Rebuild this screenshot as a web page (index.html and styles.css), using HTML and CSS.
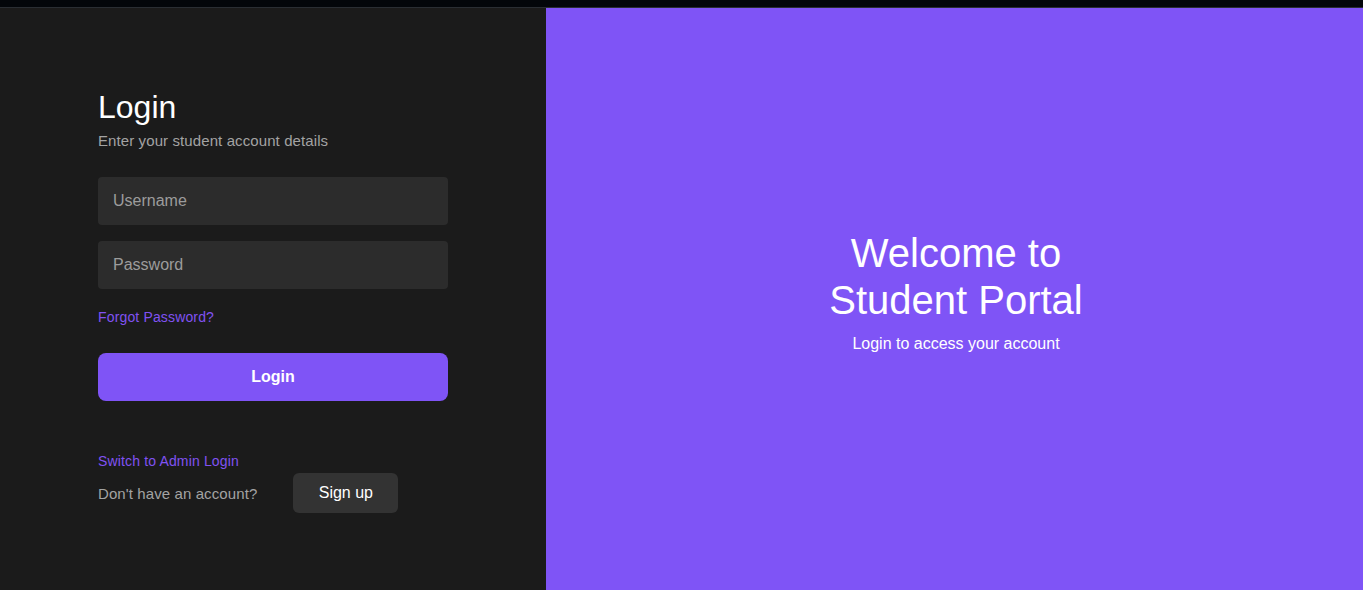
FILE: index.html
```html
<!DOCTYPE html>
<html lang="en">
<head>
    <meta charset="UTF-8">
    <meta name="viewport" content="width=device-width, initial-scale=1.0">
    <title>Student Portal - Login</title>
    <link rel="stylesheet" href="styles.css">
</head>
<body>
    <div class="topbar"></div>
    <div class="page">
        <div class="login-panel">
            <div class="login-box">
                <h2>Login</h2>
                <p class="subtitle">Enter your student account details</p>
                <input type="text" class="field" placeholder="Username">
                <input type="password" class="field" placeholder="Password">
                <a href="#" class="link forgot">Forgot Password?</a>
                <button class="btn">Login</button>
                <a href="#" class="link admin">Switch to Admin Login</a>
                <div class="signup-row">
                    <span>Don't have an account?</span>
                    <button class="btn-secondary">Sign up</button>
                </div>
            </div>
        </div>
        <div class="welcome-panel">
            <h1>Welcome to<br>Student Portal</h1>
            <p>Login to access your account</p>
        </div>
    </div>
</body>
</html>
```

FILE: styles.css
```css
* {
    margin: 0;
    padding: 0;
    box-sizing: border-box;
}

html, body {
    height: 100%;
}

body {
    font-family: 'Liberation Sans', Arial, sans-serif;
    background-color: #1b1b1b;
    display: flex;
    flex-direction: column;
    overflow: hidden;
}

.topbar {
    height: 8px;
    background-color: #03060a;
    border-bottom: 1px solid #2a2e33;
    flex-shrink: 0;
}

.page {
    flex: 1;
    display: flex;
}

.login-panel {
    width: 546px;
    flex-shrink: 0;
    background-color: #1b1b1b;
    padding: 81px 0 0 98px;
}

.login-box {
    width: 350px;
    display: flex;
    flex-direction: column;
    align-items: flex-start;
}

.login-box h2 {
    font-size: 32px;
    font-weight: 400;
    line-height: 37px;
    color: #ffffff;
}

.subtitle {
    margin-top: 6px;
    font-size: 15px;
    line-height: 17px;
    color: #a3a3a3;
    letter-spacing: 0.1px;
}

.field {
    width: 100%;
    height: 48px;
    margin-top: 28px;
    padding: 0 15px;
    background-color: #2c2c2c;
    border: none;
    border-radius: 4px;
    color: #ffffff;
    font-family: inherit;
    font-size: 16px;
    outline: none;
}

.field + .field {
    margin-top: 16px;
}

.field::placeholder {
    color: #9c9c9c;
}

.link {
    font-size: 14px;
    line-height: 16px;
    color: #8052f2;
    text-decoration: none;
    letter-spacing: 0.15px;
}

.forgot {
    margin-top: 20px;
}

.btn {
    width: 100%;
    height: 48px;
    margin-top: 28px;
    background-color: #7f54f6;
    color: #ffffff;
    border: none;
    border-radius: 8px;
    font-family: inherit;
    font-size: 16px;
    font-weight: 700;
    cursor: pointer;
}

.admin {
    margin-top: 52px;
}

.signup-row {
    margin-top: 4px;
    display: flex;
    align-items: center;
    gap: 36px;
    font-size: 15px;
    color: #a3a3a3;
    letter-spacing: 0.1px;
}

.btn-secondary {
    width: 105px;
    height: 40px;
    background-color: #333333;
    color: #ffffff;
    border: none;
    border-radius: 6px;
    font-family: inherit;
    font-size: 16px;
    cursor: pointer;
}

.welcome-panel {
    flex: 1;
    background-color: #7f54f6;
    color: #ffffff;
    display: flex;
    flex-direction: column;
    justify-content: center;
    align-items: center;
    text-align: center;
    padding: 0 0 15px 3px;
}

.welcome-panel h1 {
    font-size: 40px;
    font-weight: 400;
    line-height: 47px;
}

.welcome-panel p {
    margin-top: 11px;
    font-size: 16px;
    line-height: 18px;
}
```
